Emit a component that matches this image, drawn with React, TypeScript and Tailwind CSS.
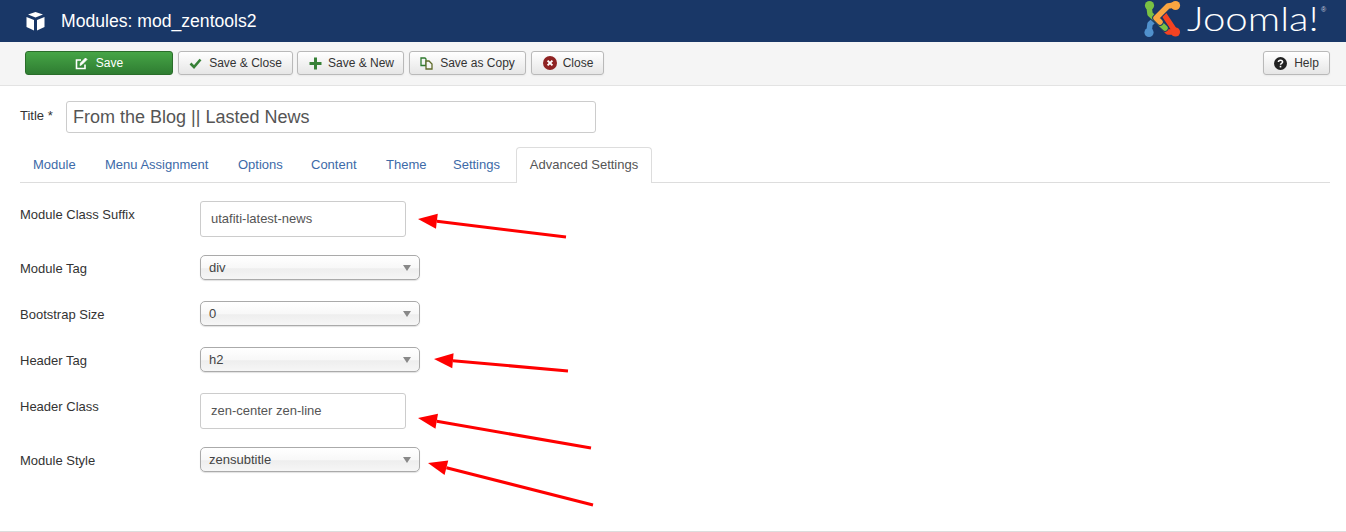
import React from 'react';

const font = "font-['Liberation_Sans',Arial,sans-serif]";

const Arm = ({ d, color, cx, cy }: { d: string; color: string; cx: number; cy: number }) => (
  <>
    <path d={d} stroke="#193767" strokeWidth="7.5" />
    <path d={d} stroke={color} strokeWidth="5.5" />
    <circle cx={cx} cy={cy} r="4.6" fill={color} />
  </>
);

const JoomlaMark = () => (
  <svg width="38" height="38" viewBox="0 0 38 38" fill="none" strokeLinecap="round" strokeLinejoin="round">
    <Arm d="M5 32 L6 24 L21 10" color="#5091cd" cx={5} cy={32.5} />
    <Arm d="M31 32 L24 32 L15 23 M31 31 L19 13" color="#f44321" cx={31.5} cy={32} />
    <Arm d="M5 6 L6 14 L21 28" color="#7ac143" cx={5.5} cy={5.5} />
    <Arm d="M31 5 L24 6 L12 18 L16 22" color="#f9a541" cx={31.5} cy={5.5} />
  </svg>
);

const Btn = ({ icon, label, className = '' }: { icon: React.ReactNode; label: string; className?: string }) => (
  <button className={`h-[24px] flex items-center justify-center rounded-[3px] border border-[#b9b9b9] bg-gradient-to-b from-white to-[#e6e6e6] text-[12px] text-[#333] shadow-[0_1px_2px_rgba(0,0,0,0.05)] ${className}`}>
    {icon}
    {label}
  </button>
);

const Field = ({ value }: { value: string }) => (
  <div className="w-[206px] h-[36px] flex items-center pl-[10px] rounded-[3px] border border-[#ccc] bg-white text-[13px] text-[#555]">
    {value}
  </div>
);

const Select = ({ value }: { value: string }) => (
  <div className="relative w-[220px] h-[25px] flex items-center pl-[8px] rounded-[5px] border border-[#aaa] bg-[linear-gradient(to_bottom,#fff_0%,#f8f8f8_50%,#eee_56%,#f6f6f6_100%)] text-[13px] text-[#444] shadow-[0_1px_1px_rgba(0,0,0,0.12)]">
    {value}
    <span className="absolute right-[8px] top-[9px] w-0 h-0 border-l-[4px] border-r-[4px] border-t-[6px] border-l-transparent border-r-transparent border-t-[#888]" />
  </div>
);

const Row = ({ label, className, children }: { label: string; className: string; children: React.ReactNode }) => (
  <div className={`flex ${className}`}>
    <div className="w-[180px] shrink-0 pt-[4px] text-[13px] text-[#333]">{label}</div>
    {children}
  </div>
);

const Arrow = ({ x1, y1, x2, y2 }: { x1: number; y1: number; x2: number; y2: number }) => {
  const a = Math.atan2(y1 - y2, x1 - x2);
  const len = 19;
  const w = 7.5;
  const bx = x2 + Math.cos(a) * len;
  const by = y2 + Math.sin(a) * len;
  const nx = -Math.sin(a) * w;
  const ny = Math.cos(a) * w;
  return (
    <>
      <line x1={x1} y1={y1} x2={bx} y2={by} stroke="#ff0000" strokeWidth="3" />
      <polygon points={`${x2},${y2} ${bx + nx},${by + ny} ${bx - nx},${by - ny}`} fill="#ff0000" />
    </>
  );
};

export default function App() {
  const tabs = [
    ['Module', 'w-[72px]'],
    ['Menu Assignment', 'w-[133px]'],
    ['Options', 'w-[73px]'],
    ['Content', 'w-[75px]'],
    ['Theme', 'w-[67px]'],
    ['Settings', 'w-[76px]'],
  ];

  return (
    <div className={`relative w-[1346px] h-[532px] overflow-hidden bg-white ${font}`}>
      {/* Header */}
      <div className="h-[42px] bg-[#193767] flex items-center pl-[25px] text-white">
        <svg width="21" height="21" viewBox="0 0 21 21" fill="#fff">
          <path d="M10.5 1 L18 3.5 L10.5 6.5 L3 3.5 Z" />
          <path d="M1.5 6 L9 9 V19.5 L1.5 16 Z" />
          <path d="M19.5 6 L12 9 V19.5 L19.5 16 Z" />
        </svg>
        <span className="ml-[15px] text-[17.6px]">Modules: mod_zentools2</span>
        <div className="ml-auto w-[202px] h-[42px] flex items-start">
          <JoomlaMark />
          <span className="ml-[5px] w-[134px] origin-left scale-x-[1.22] text-[33px] leading-[36px] font-['Lato',sans-serif] font-light text-white">Joomla!</span>
          <span className="mt-[6px] text-[7px] leading-[8px] text-[#ccd]">®</span>
        </div>
      </div>

      {/* Toolbar */}
      <div className="h-[44px] bg-[#f5f5f5] border-b border-[#e3e3e3] flex items-center pl-[25px] pr-[16px] pb-[1px]">
        <button className="w-[148px] h-[24px] flex items-center justify-center rounded-[3px] border border-[#2a6d2a] bg-gradient-to-b from-[#46a546] to-[#2f7d32] text-[12px] text-white">
          <svg className="mr-[8px]" width="13" height="13" viewBox="0 0 13 13" fill="none" stroke="#fff" strokeWidth="1.6">
            <path d="M10 7.5 V11.5 H1.5 V3 H6" />
            <path d="M5 8.5 L5.5 6 L10.5 1 L12 2.5 L7 7.5 Z" fill="#fff" strokeWidth="0.8" />
          </svg>
          Save
        </button>
        <Btn
          className="ml-[5px] w-[115px]"
          label="Save & Close"
          icon={
            <svg className="mr-[7px]" width="13" height="11" viewBox="0 0 13 11" fill="none" stroke="#378137" strokeWidth="2.6">
              <path d="M1.5 5.5 L5 9 L11.5 1.5" />
            </svg>
          }
        />
        <Btn
          className="ml-[4px] w-[107px] pl-[2px]"
          label="Save & New"
          icon={
            <svg className="mr-[6px]" width="13" height="13" viewBox="0 0 13 13" fill="#378137">
              <path d="M5 0.5 H8 V5 H12.5 V8 H8 V12.5 H5 V8 H0.5 V5 H5 Z" />
            </svg>
          }
        />
        <Btn
          className="ml-[5px] w-[117px]"
          label="Save as Copy"
          icon={
            <svg className="mr-[7px]" width="13" height="13" viewBox="0 0 13 13" fill="none" stroke="#2f7a2f" strokeWidth="1.3">
              <path d="M1 1 H5 L6 2 V8.5 H1 Z" />
              <path d="M6 4 H9 L12 7 V12 H6 Z" fill="#f4f4f4" stroke="#5f6b2a" />
            </svg>
          }
        />
        <Btn
          className="ml-[5px] w-[73px] pl-[1px]"
          label="Close"
          icon={
            <svg className="mr-[6px]" width="14" height="14" viewBox="0 0 14 14">
              <circle cx="7" cy="7" r="7" fill="#8f2323" />
              <path d="M4.6 4.6 L9.4 9.4 M9.4 4.6 L4.6 9.4" stroke="#fff" strokeWidth="2" />
            </svg>
          }
        />
        <Btn
          className="ml-auto w-[67px]"
          label="Help"
          icon={
            <svg className="mr-[7px]" width="13" height="13" viewBox="0 0 13 13">
              <circle cx="6.5" cy="6.5" r="6.5" fill="#222" />
              <path d="M4.4 5 C4.4 2.6 8.6 2.6 8.6 5 C8.6 6.4 6.5 6.3 6.5 7.8" stroke="#fff" strokeWidth="1.5" fill="none" />
              <rect x="5.7" y="8.8" width="1.6" height="1.6" fill="#fff" />
            </svg>
          }
        />
      </div>

      {/* Title */}
      <div className="pl-[20px] pr-[16px] pt-[15px]">
        <div className="flex">
          <div className="w-[46px] shrink-0 pt-[5px] text-[13px] text-[#333]">Title *</div>
          <div className="w-[530px] h-[32px] flex items-center pl-[6px] rounded-[3px] border border-[#ccc] text-[18px] text-[#555]">
            From the Blog || Lasted News
          </div>
        </div>

        {/* Tabs */}
        <div className="mt-[14px] h-[36px] flex border-b border-[#ddd] text-[13px]">
          {tabs.map(([t, w]) => (
            <div key={t} className={`${w} h-[35px] flex items-center pl-[13px] text-[#3d6aa8]`}>{t}</div>
          ))}
          <div className="w-[136px] h-[36px] flex items-center justify-center pb-[1px] rounded-t-[4px] border border-b-0 border-[#ddd] bg-white text-[#555]">
            Advanced Settings
          </div>
        </div>

        {/* Form */}
        <Row label="Module Class Suffix" className="mt-[18px]"><Field value="utafiti-latest-news" /></Row>
        <Row label="Module Tag" className="mt-[18px]"><Select value="div" /></Row>
        <Row label="Bootstrap Size" className="mt-[21px]"><Select value="0" /></Row>
        <Row label="Header Tag" className="mt-[21px]"><Select value="h2" /></Row>
        <Row label="Header Class" className="mt-[21px]"><Field value="zen-center zen-line" /></Row>
        <Row label="Module Style" className="mt-[18px]"><Select value="zensubtitle" /></Row>
      </div>

      {/* Annotation arrows */}
      <svg className="absolute left-0 top-0 pointer-events-none" width="1346" height="532">
        <Arrow x1={566} y1={237} x2={418} y2={219} />
        <Arrow x1={568} y1={371} x2={434} y2={359} />
        <Arrow x1={591} y1={448} x2={418} y2={418} />
        <Arrow x1={593} y1={505} x2={428} y2={463} />
      </svg>

      {/* Bottom rule */}
      <div className="absolute left-0 right-0 bottom-0 h-[1px] bg-[#ddd]" />
    </div>
  );
}
